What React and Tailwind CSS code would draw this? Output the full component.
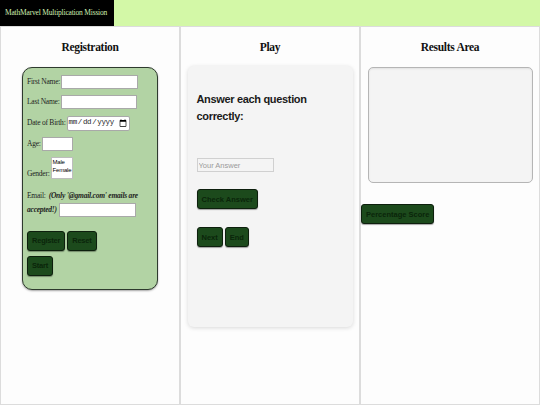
import React from 'react'

const btn =
  "h-[20px] px-[4px] bg-[#1c4a1c] border border-[#0d1f0d] rounded-[3px] text-[#0a250a] font-bold text-[7.5px] leading-[9px] font-['Liberation_Sans',Arial,sans-serif] shadow-[0_1px_1px_rgba(0,0,0,0.35)]"

const field = 'h-[14px] bg-white border border-[#a9a9a9] outline-none'

function Column({ title, children }) {
  return (
    <section className="w-1/3 min-h-[379px] border border-[#dcdcdc]">
      <h2 className="mt-[13px] mb-[13px] text-center text-[11.5px] leading-[14px] font-bold tracking-tight text-[#111]">
        {title}
      </h2>
      {children}
    </section>
  )
}

export default function App() {
  return (
    <div className="min-h-[405px] bg-[#fdfdfd] font-['Liberation_Serif','Times_New_Roman',serif]">
      {/* Header */}
      <header className="h-[26px] bg-[#d3f8a7] flex">
        <div className="w-[114px] bg-black flex items-center pl-[5px] whitespace-nowrap overflow-hidden">
          <span className="text-[7.5px] tracking-tight text-[#cfeeb0]">MathMarvel Multiplication Mission</span>
        </div>
      </header>

      <main className="flex">
        {/* Registration */}
        <Column title="Registration">
          <form className="mx-auto w-[136px] bg-[#b2d3a4] border-[1.5px] border-[#2e3a2e] rounded-[10px] shadow-[0_1px_2px_rgba(0,0,0,0.35)] pl-[4px] pt-[6.5px] pb-[13px] text-[7.5px] tracking-[-0.03em] text-[#1e1e1e]">
            <div className="flex items-center">
              <label>First Name:</label>
              <input className={`${field} w-[77px] ml-[1px]`} />
            </div>
            <div className="flex items-center mt-[6px]">
              <label>Last Name:</label>
              <input className={`${field} w-[76px] ml-[1px]`} />
            </div>
            <div className="flex items-center mt-[7px]">
              <label>Date of Birth:</label>
              <input
                type="date"
                className={`${field} h-[15px] w-[63px] ml-[1px] text-[7.5px] font-['Liberation_Mono',monospace] tracking-tighter rounded-[2px]`}
              />
            </div>
            <div className="flex items-center mt-[6px]">
              <label>Age:</label>
              <input className={`${field} w-[31px] ml-[1px]`} />
            </div>
            <div className="flex items-end mt-[6px]">
              <label className="leading-[11px]">Gender:</label>
              <select
                size={2}
                className="ml-[1px] w-[22px] h-[22px] bg-white border border-[#bdbdbd] overflow-hidden text-[6px] leading-[9px] font-['Liberation_Sans',Arial,sans-serif] text-black"
              >
                <option className="px-[1px] py-[1px]">Male</option>
                <option className="px-[1px] py-[1px]">Female</option>
              </select>
            </div>
            <div className="mt-[10px] leading-[14px] pr-[4px]">
              <div>
                <span className="mr-[3px]">Email:</span>
                <b className="italic">(Only '@gmail.com' emails are</b>
              </div>
              <div className="flex items-center">
                <b className="italic">accepted!)</b>
                <input className={`${field} w-[77px] ml-[2px]`} />
              </div>
            </div>
            <div className="flex gap-[2px] mt-[14px]">
              <button type="button" className={btn}>Register</button>
              <button type="button" className={btn}>Reset</button>
            </div>
            <div className="mt-[5px]">
              <button type="button" className={btn}>Start</button>
            </div>
          </form>
        </Column>

        {/* Play */}
        <Column title="Play">
          <div className="mx-auto w-[165px] h-[261px] -mt-[1px] bg-[#f4f4f4] rounded-[6px] shadow-[0_1px_4px_rgba(0,0,0,0.15)] pl-[9px] pt-[25px] font-['Liberation_Sans',Arial,sans-serif]">
            <h3 className="text-[11px] leading-[17px] font-bold text-[#1a1a1a] tracking-[-0.03em] w-[120px]">
              Answer each question correctly:
            </h3>
            <input
              placeholder="Your Answer"
              className="mt-[33px] block w-[77px] h-[14px] px-[1px] bg-[#f4f4f4] border border-[#d0d0d0] text-[7.5px] placeholder:text-[#9a9a9a] outline-none"
            />
            <button type="button" className={`${btn} mt-[17px] h-[19px]`}>Check Answer</button>
            <div className="flex gap-[2px] mt-[18px]">
              <button type="button" className={`${btn} h-[19px]`}>Next</button>
              <button type="button" className={`${btn} h-[19px]`}>End</button>
            </div>
          </div>
        </Column>

        {/* Results */}
        <Column title="Results Area">
          <textarea className="block mx-auto w-[165px] h-[116px] bg-[#f4f4f4] border border-[#b5b5b5] rounded-[5px] shadow-[inset_0_1px_2px_rgba(0,0,0,0.08)] resize-none outline-none" />
          <button type="button" className={`${btn} mt-[21px]`}>Percentage Score</button>
        </Column>
      </main>
    </div>
  )
}
